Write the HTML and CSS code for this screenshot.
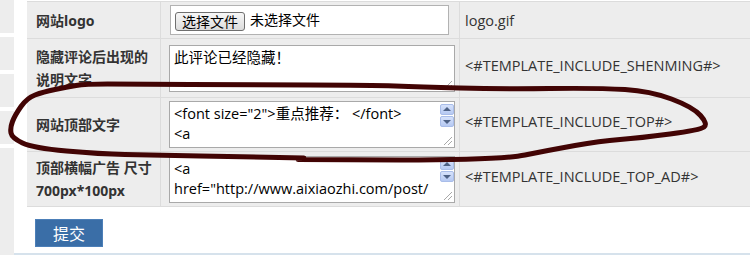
FILE: index.html
```html
<!DOCTYPE html>
<html lang="zh-CN">
<head>
    <meta charset="UTF-8">
    <title>网站设置</title>
    <link rel="stylesheet" href="styles.css">
</head>
<body>
    <div class="page">
        <div class="sidebar">
            <div class="menu-item"></div>
            <div class="menu-item"></div>
            <div class="menu-item"></div>
            <div class="menu-item"></div>
            <div class="menu-item last"></div>
        </div>
        <div class="content">
            <table class="form-table">
                <tr class="row-logo">
                    <th>网站logo</th>
                    <td class="field">
                        <div class="file-box">
                            <button class="file-btn">选择文件</button>
                            <span class="file-name">未选择文件</span>
                        </div>
                    </td>
                    <td class="tag">logo.gif</td>
                </tr>
                <tr class="row-note">
                    <th>隐藏评论后出现的说明文字</th>
                    <td class="field">
                        <div class="area">
                            <textarea>此评论已经隐藏！</textarea>
                            <div class="scroll"><span class="grip"></span></div>
                        </div>
                    </td>
                    <td class="tag">&lt;#TEMPLATE_INCLUDE_SHENMING#&gt;</td>
                </tr>
                <tr class="row-top">
                    <th>网站顶部文字</th>
                    <td class="field">
                        <div class="area">
                            <textarea>&lt;font size="2"&gt;重点推荐： &lt;/font&gt;
&lt;a</textarea>
                            <div class="scroll">
                                <span class="arrow up"></span>
                                <span class="arrow down"></span>
                                <span class="grip"></span>
                            </div>
                        </div>
                    </td>
                    <td class="tag">&lt;#TEMPLATE_INCLUDE_TOP#&gt;</td>
                </tr>
                <tr class="row-ad">
                    <th>顶部横幅广告 尺寸 700px*100px</th>
                    <td class="field">
                        <div class="area">
                            <textarea>&lt;a
href="http://www.aixiaozhi.com/post/</textarea>
                            <div class="scroll">
                                <span class="arrow up"></span>
                                <span class="arrow down"></span>
                                <span class="grip"></span>
                            </div>
                        </div>
                    </td>
                    <td class="tag">&lt;#TEMPLATE_INCLUDE_TOP_AD#&gt;</td>
                </tr>
            </table>
            <button class="submit">提交</button>
        </div>
    </div>

    <!-- hand-drawn mark over the form -->
    <svg class="scribble" width="750" height="256" viewBox="0 0 750 256" xmlns="http://www.w3.org/2000/svg">
        <path d="M 298 159.5 L 400 160 Q 500 160 525 155 Q 550 150 575 145.5 Q 600 141 620 139.5 Q 640 138 670 134 Q 700 130 704 127 Q 708 124 700.5 115.5 Q 693 107 671.5 99 Q 650 91 625 89.5 Q 600 88 550 88.5 Q 500 89 460 88 Q 420 87 395 86 Q 370 85 310 85 Q 250 85 190 84.5 Q 130 84 107.5 84 Q 85 84 76 85.5 Q 67 87 55 89.5 Q 43 92 35 95 Q 27 98 21 106.5 Q 15 115 12.5 121.5 Q 10 128 11 133 Q 12 138 22.5 143 Q 33 148 66.5 151 Q 100 154 125 154.5 Q 150 155 200 156 Q 250 157 304 158"
              fill="none" stroke="#420404" stroke-width="5" stroke-linecap="round" stroke-linejoin="round"/>
    </svg>
</body>
</html>
```

FILE: styles.css
```css
html, body {
    margin: 0;
    padding: 0;
    background: #fff;
}
body {
    position: relative;
    width: 750px;
    height: 256px;
    overflow: hidden;
    font-family: "Open Sans", "Noto Sans CJK SC", sans-serif;
    font-size: 14px;
    color: #333;
}
.page {
    display: flex;
    height: 255px;
}
.sidebar {
    width: 14px;
    display: flex;
    flex-direction: column;
    gap: 4px;
}
.menu-item {
    height: 33px;
    background: #ededed;
}
.menu-item.last { flex: 1; }
.content {
    flex: 1;
    padding-left: 13px;
    border-bottom: 2px solid #d6e2ec;
    overflow: hidden;
}
.form-table {
    width: 740px;
    margin-top: 1px;
    border-collapse: collapse;
    background: #ededed;
}
.form-table th,
.form-table td {
    padding: 0;
    border-bottom: 1px solid #dcdcdc;
    vertical-align: middle;
}
.row-logo th,
.row-logo td { border-top: 1px solid #dcdcdc; }
.form-table th {
    width: 124px;
    padding-left: 9px;
    border-right: 1px solid #dcdcdc;
    text-align: left;
    font-family: "Noto Sans", "Noto Sans CJK SC", sans-serif;
    font-weight: 700;
    font-size: 14px;
    line-height: 23px;
    color: #333;
}
.row-logo { height: 37px; }
.row-note { height: 59px; }
.row-top { height: 54px; }
.row-ad { height: 55px; }
.field {
    width: 288px;
    padding: 0 2px 0 8px !important;
    border-right: 1px solid #dcdcdc;
}
.tag {
    padding: 0 0 6px 5px !important;
    color: #333;
    font-size: 14.5px;
    white-space: nowrap;
}
.row-logo .tag { padding-bottom: 0 !important; }
.file-box {
    display: flex;
    align-items: flex-start;
    width: 279px;
    height: 30px;
    margin-left: 1px;
    box-sizing: border-box;
    border: 1px solid #b2b2b2;
    background: #fff;
    padding: 6px 0 0 4px;
}
.file-btn {
    height: 19px;
    width: 70px;
    padding: 0;
    border: 1px solid #6f6f6f;
    border-radius: 3px;
    background: linear-gradient(#f7f7f7, #dcdcdc);
    font-family: "Noto Sans CJK SC", sans-serif;
    font-size: 14px;
    line-height: 17px;
    color: #000;
}
.file-name {
    margin: -3px 0 0 5px;
    font-family: "Noto Sans CJK SC", sans-serif;
    font-size: 14px;
    color: #000;
}
.area {
    display: flex;
    width: 286px;
    height: 47px;
    box-sizing: border-box;
    border: 1px solid #a9a9a9;
    background: #fff;
}
.area textarea {
    flex: 1;
    margin: 0;
    padding: 2px 4px;
    border: none;
    outline: none;
    resize: none;
    overflow: hidden;
    background: transparent;
    font-family: "Open Sans", "Noto Sans CJK SC", sans-serif;
    font-size: 14.5px;
    line-height: 20px;
    color: #000;
}
.scroll {
    width: 15px;
    display: flex;
    flex-direction: column;
    align-items: center;
    padding-top: 2px;
    box-sizing: border-box;
}
.arrow {
    position: relative;
    width: 14px;
    height: 11px;
    margin-bottom: 1px;
    box-sizing: border-box;
    border: 1px solid #a9bde9;
    border-radius: 2px;
    background: linear-gradient(#d6e2fb, #b6c9f2);
}
.arrow::after {
    content: "";
    position: absolute;
    left: 2px;
    width: 0;
    height: 0;
    border-left: 4px solid transparent;
    border-right: 4px solid transparent;
}
.arrow.up::after {
    top: 2px;
    border-bottom: 4px solid #4d6185;
}
.arrow.down::after {
    top: 3px;
    border-top: 4px solid #4d6185;
}
.grip {
    width: 8px;
    height: 8px;
    margin-top: auto;
    margin-bottom: 2px;
    align-self: flex-end;
    margin-right: 2px;
    background: linear-gradient(135deg, transparent 45%, #a8a8a8 45%, #a8a8a8 55%, transparent 55%, transparent 70%, #a8a8a8 70%, #a8a8a8 80%, transparent 80%);
}
.submit {
    display: block;
    width: 68px;
    height: 28px;
    margin: 12px 0 0 8px;
    padding: 0;
    border: 1px solid #4c7fb8;
    background: #3a6ea7;
    color: #fff;
    font-family: "Noto Sans CJK SC", sans-serif;
    font-size: 16px;
}
.scribble {
    position: absolute;
    left: 0;
    top: 0;
    pointer-events: none;
}
```
